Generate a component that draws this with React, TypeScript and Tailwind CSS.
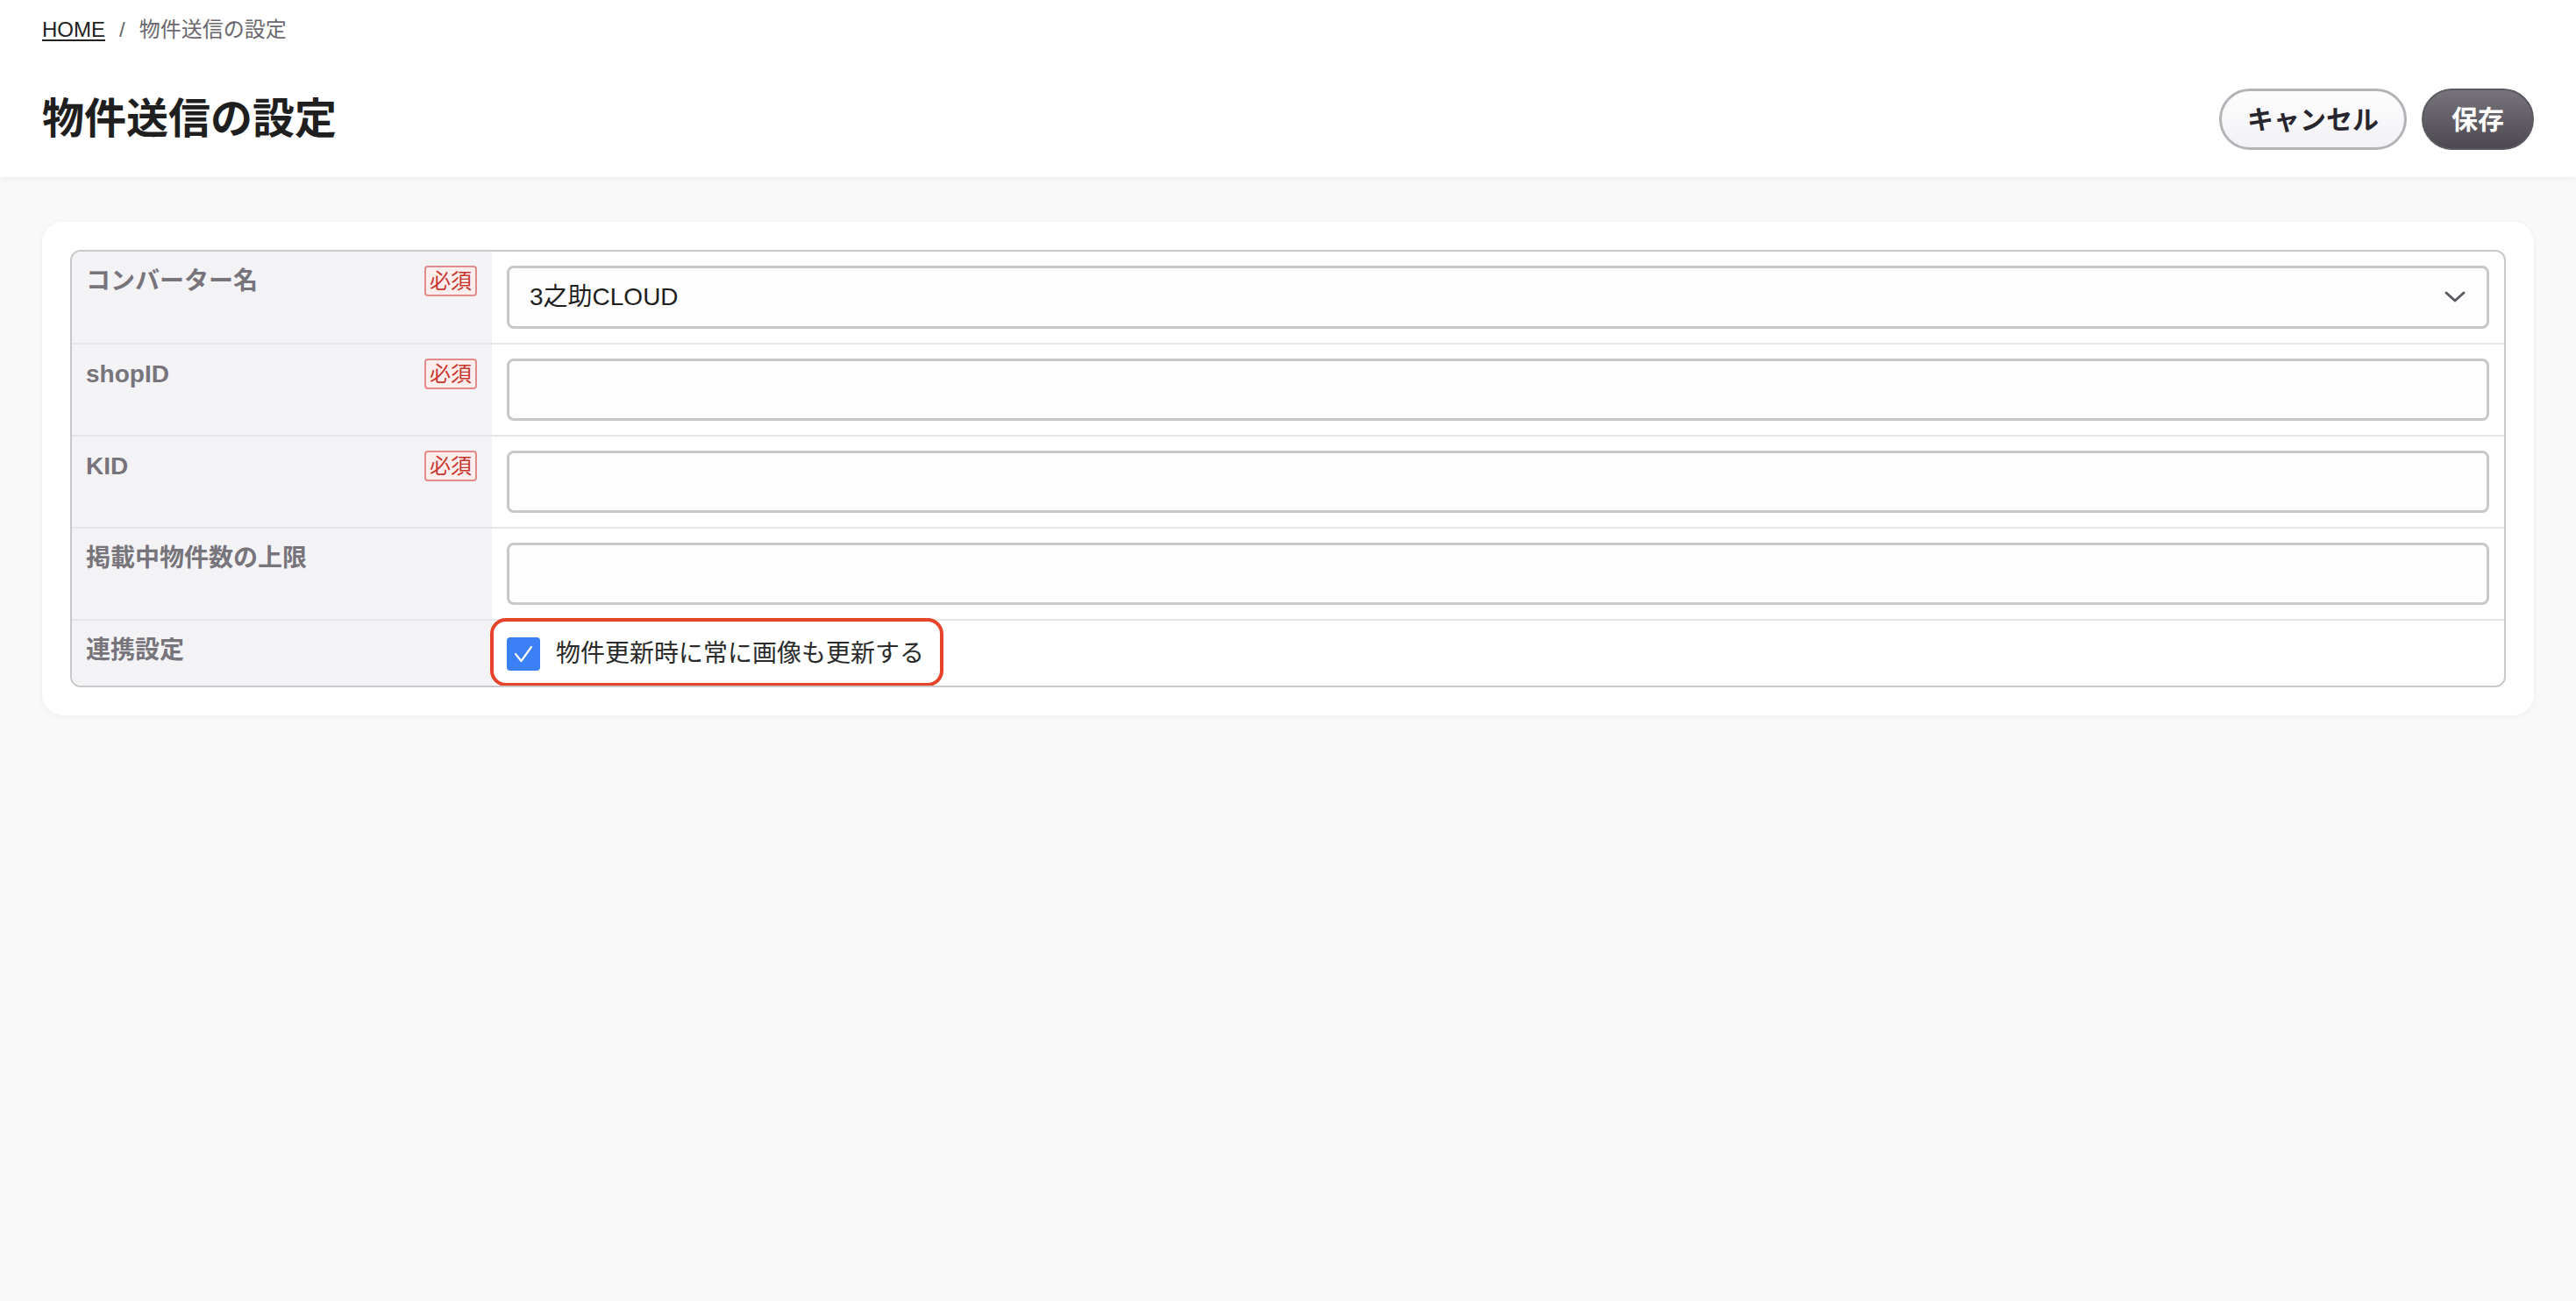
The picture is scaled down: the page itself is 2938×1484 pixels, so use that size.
import React from "react";

const FONT = { fontFamily: '"Liberation Sans", "Noto Sans CJK JP", sans-serif' };

function Badge() {
  return (
    <span className="inline-flex h-[35px] w-[60px] shrink-0 items-center justify-center rounded-[4px] border-2 border-[#e38b8b] bg-[#fdeeee] text-[24px] leading-none text-[#c8372f]">
      必須
    </span>
  );
}

function LabelCell({ label, required }: { label: string; required?: boolean }) {
  return (
    <div className="flex w-[479px] shrink-0 items-start justify-between bg-[#f3f3f5] pl-4 pr-[17px] pt-[16px] pb-[16px]">
      <span className="text-[28px] font-bold leading-[36px] text-[#77747b]">{label}</span>
      {required ? <Badge /> : null}
    </div>
  );
}

function TextInput() {
  return (
    <div className="h-[71px] w-full rounded-[8px] border-[3px] border-[#c8c8ca] bg-[#fdfdfe]" />
  );
}

export default function App() {
  return (
    <div style={FONT} className="min-h-[1484px] w-full bg-[#f9f9f9] text-[#222]">
      <header className="bg-white px-12 pt-[18px] pb-[31px] shadow-[0_2px_8px_rgba(0,0,0,0.06)]">
        <nav className="flex items-center gap-4 text-[24px] leading-[32px] text-[#6a686e]">
          <a className="text-[#222] underline underline-offset-[3px]">HOME</a>
          <span>/</span>
          <span>物件送信の設定</span>
        </nav>
        <div className="mt-[51px] flex items-center justify-between">
          <h1 className="text-[48px] font-bold leading-[70px] text-[#1f1f1f]">物件送信の設定</h1>
          <div className="flex items-center gap-[17px]">
            <button className="h-[70px] rounded-full border-[3px] border-[#b3b2b6] bg-gradient-to-b from-[#fdfdfe] to-[#f2f2f5] px-[29px] text-[30px] font-bold text-[#27252d]">
              キャンセル
            </button>
            <button className="h-[70px] rounded-full border-2 border-[#5c5960] bg-gradient-to-b from-[#77747c] to-[#4c4951] px-[32px] text-[30px] font-bold text-white">
              保存
            </button>
          </div>
        </div>
      </header>

      <main className="px-12 pt-[51px]">
        <section className="rounded-[24px] bg-white p-8 shadow-[0_1px_6px_rgba(0,0,0,0.06)]">
          <div className="overflow-hidden rounded-[12px] border-2 border-[#c9c9cb]">
            <div className="flex border-b-2 border-[#e6e6e8]">
              <LabelCell label="コンバーター名" required />
              <div className="flex-1 px-[17px] pt-[16px] pb-[16px]">
                <div className="flex h-[72px] w-full items-center justify-between rounded-[8px] border-[3px] border-[#c8c8ca] bg-[#fdfdfe] pl-[23px] pr-[24px]">
                  <span className="text-[28px] text-[#1f1f1f]">3之助CLOUD</span>
                  <svg width="24" height="14" viewBox="0 0 24 14" fill="none">
                    <path d="M2 2l10 9 10-9" stroke="#5e5b63" strokeWidth="3" strokeLinecap="round" strokeLinejoin="round" />
                  </svg>
                </div>
              </div>
            </div>
            <div className="flex border-b-2 border-[#e6e6e8]">
              <LabelCell label="shopID" required />
              <div className="flex-1 px-[17px] pt-[16px] pb-[16px]">
                <TextInput />
              </div>
            </div>
            <div className="flex border-b-2 border-[#e6e6e8]">
              <LabelCell label="KID" required />
              <div className="flex-1 px-[17px] pt-[16px] pb-[16px]">
                <TextInput />
              </div>
            </div>
            <div className="flex border-b-2 border-[#e6e6e8]">
              <LabelCell label="掲載中物件数の上限" />
              <div className="flex-1 px-[17px] pt-[16px] pb-[16px]">
                <TextInput />
              </div>
            </div>
            <div className="flex h-[74px]">
              <LabelCell label="連携設定" />
              <div className="flex flex-1 items-center px-[17px] pt-[2px]">
                <label className="relative flex items-center gap-[18px]">
                  <span className="flex h-[38px] w-[38px] items-center justify-center rounded-[4px] bg-[#3b80f6]">
                    <svg width="26" height="22" viewBox="0 0 26 22" fill="none">
                      <path d="M4 11l6.5 8L22 3" stroke="white" strokeWidth="2.2" strokeLinecap="round" strokeLinejoin="round" />
                    </svg>
                  </span>
                  <span className="text-[28px] leading-[38px] text-[#2a2a2a]">物件更新時に常に画像も更新する</span>
                  <span className="pointer-events-none absolute -left-[19px] -right-[22px] -top-[22px] -bottom-[18px] rounded-[18px] border-[4px] border-[#e6432b]" />
                </label>
              </div>
            </div>
          </div>
        </section>
      </main>
    </div>
  );
}
